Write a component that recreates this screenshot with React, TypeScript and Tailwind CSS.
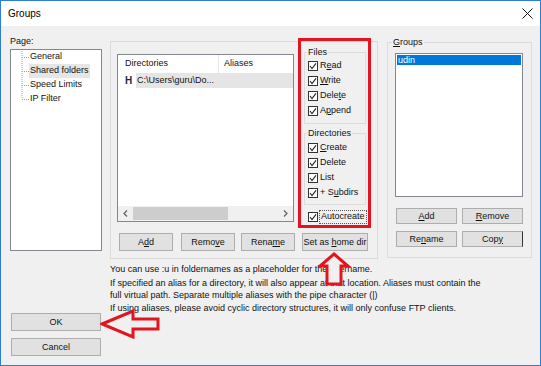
import React from "react";

function CheckBox() {
  return (
    <svg width="10" height="10" viewBox="0 0 10 10" className="shrink-0">
      <rect x="0.5" y="0.5" width="9" height="9" fill="#fff" stroke="#333" strokeWidth="1" />
      <polyline points="2,5 4,7.5 8,2.3" fill="none" stroke="#222" strokeWidth="1.1" />
    </svg>
  );
}

function CheckRow({ children }: { children: React.ReactNode }) {
  return (
    <div className="flex items-center h-[15px]">
      <CheckBox />
      <span className="ml-[2px] leading-none">{children}</span>
    </div>
  );
}

function Btn({ children, className = "" }: { children: React.ReactNode; className?: string }) {
  return (
    <div className={"flex items-center justify-center bg-[#e1e1e1] border border-[#adadad] leading-none whitespace-nowrap " + className}>
      <span>{children}</span>
    </div>
  );
}

export default function App() {
  return (
    <div className="relative w-[541px] h-[366px] bg-[#f0f0f0] border border-[#2f7dd0] flex flex-col overflow-hidden text-[9px] text-[#111] font-['Liberation_Sans',Arial,sans-serif]">
      {/* Title bar */}
      <div className="h-[25px] bg-white flex items-center justify-between pl-[7px] pr-[7px] shrink-0">
        <span className="text-[10px] text-black">Groups</span>
        <svg width="11" height="11" viewBox="0 0 11 11">
          <line x1="0.5" y1="0.5" x2="10.5" y2="10.5" stroke="#111" strokeWidth="1" />
          <line x1="10.5" y1="0.5" x2="0.5" y2="10.5" stroke="#111" strokeWidth="1" />
        </svg>
      </div>

      {/* Body */}
      <div className="flex flex-1 pt-[9px] pl-[9px]">
        {/* Left column */}
        <div className="w-[92px] flex flex-col">
          <div className="h-[14px] flex items-center">Page:</div>
          <div className="h-[202px] bg-white border border-[#828790] pt-0 flex">
            <svg width="18" height="56" viewBox="0 0 18 56" className="shrink-0">
              <line x1="11" y1="1" x2="11" y2="49" stroke="#a0a0a0" strokeWidth="1" strokeDasharray="1 1" />
              <line x1="11" y1="7.5" x2="18" y2="7.5" stroke="#a0a0a0" strokeWidth="1" strokeDasharray="1 1" />
              <line x1="11" y1="21.5" x2="18" y2="21.5" stroke="#a0a0a0" strokeWidth="1" strokeDasharray="1 1" />
              <line x1="11" y1="35.5" x2="18" y2="35.5" stroke="#a0a0a0" strokeWidth="1" strokeDasharray="1 1" />
              <line x1="11" y1="49.5" x2="18" y2="49.5" stroke="#a0a0a0" strokeWidth="1" strokeDasharray="1 1" />
            </svg>
            <div className="flex flex-col">
              <div className="h-[14px] flex items-center px-[1px]">General</div>
              <div className="h-[14px] flex items-center px-[1px] bg-[#e6e6e6]">Shared folders</div>
              <div className="h-[14px] flex items-center px-[1px]">Speed Limits</div>
              <div className="h-[14px] flex items-center px-[1px]">IP Filter</div>
            </div>
          </div>
          <Btn className="mt-[62px] ml-[1px] w-[90px] h-[18px] border-[#0078d7]">OK</Btn>
          <Btn className="mt-[7px] ml-[1px] w-[90px] h-[18px]">Cancel</Btn>
        </div>

        {/* Right area */}
        <div className="ml-[8px] flex flex-col">
          <div className="flex items-start">
            {/* Page panel */}
            <div className="relative mt-[6px] w-[268px] h-[218px] border border-[#dadada] flex flex-col">
              <div className="flex items-start">
                {/* Directory list */}
                <div className="mt-[12px] ml-[6px] w-[177px] h-[168px] bg-white border border-[#828790] flex flex-col">
                  <div className="h-[18px] flex items-center shrink-0">
                    <div className="w-[101px] h-full flex items-center pl-[7px] border-r border-[#e5e5e5]">Directories</div>
                    <div className="pl-[5px]">Aliases</div>
                  </div>
                  <div className="h-[15px] flex items-center">
                    <span className="w-[18px] pl-[7px] font-bold text-[10px] text-[#1b2a44]">H</span>
                    <div className="flex-1 h-full flex items-center bg-[#e5e5e5] pl-[1px]">C:\Users\guru\Do...</div>
                  </div>
                  <div className="flex-1" />
                  <div className="h-[15px] bg-[#f0f0f0] flex items-center shrink-0">
                    <svg width="15" height="15" viewBox="0 0 15 15" className="shrink-0">
                      <polyline points="9,4.5 6,7.5 9,10.5" fill="none" stroke="#606060" strokeWidth="1.2" />
                    </svg>
                    <div className="w-[95px] h-[13px] bg-[#cdcdcd]" />
                    <div className="flex-1" />
                    <svg width="15" height="15" viewBox="0 0 15 15" className="shrink-0">
                      <polyline points="6,4.5 9,7.5 6,10.5" fill="none" stroke="#606060" strokeWidth="1.2" />
                    </svg>
                  </div>
                </div>

                {/* Permission column */}
                <div className="ml-[10px] mt-[4px] w-[62px] flex flex-col">
                  <fieldset className="border border-[#dcdcdc] pl-[3px] pb-[5px]">
                    <legend className="ml-[-1px] px-[1px] h-[12px] leading-[12px]">Files</legend>
                    <CheckRow>R<span className="underline">e</span>ad</CheckRow>
                    <CheckRow><span className="underline">W</span>rite</CheckRow>
                    <CheckRow>Dele<span className="underline">t</span>e</CheckRow>
                    <CheckRow>A<span className="underline">p</span>pend</CheckRow>
                  </fieldset>
                  <fieldset className="mt-[3px] border border-[#dcdcdc] pl-[3px] pb-[4px]">
                    <legend className="ml-[-1px] px-[1px] h-[13px] leading-[12px]">Directories</legend>
                    <CheckRow><span className="underline">C</span>reate</CheckRow>
                    <CheckRow>Delete</CheckRow>
                    <CheckRow>List</CheckRow>
                    <CheckRow>+ S<span className="underline">u</span>bdirs</CheckRow>
                  </fieldset>
                  <div className="mt-[4px] pl-[4px] flex items-center h-[15px]">
                    <CheckBox />
                    <span className="ml-[1px] px-[1px] h-[14px] flex items-center border border-dotted border-[#555]">Autocreate</span>
                  </div>
                </div>
              </div>

              {/* Buttons */}
              <div className="mt-auto mb-[7px] flex">
                <Btn className="ml-[8px] w-[54px] h-[18px]">A<span className="underline">d</span>d</Btn>
                <Btn className="ml-[8px] w-[54px] h-[18px]">Remo<span className="underline">v</span>e</Btn>
                <Btn className="ml-[6px] w-[54px] h-[18px]">Rena<span className="underline">m</span>e</Btn>
                <Btn className="ml-[7px] w-[66px] h-[18px]">Set as <span className="underline">h</span>ome dir</Btn>
              </div>

              {/* Annotation frame */}
              <div className="absolute left-[187px] top-[-4px] w-[73px] h-[190px] border-[3px] border-[#e3141f] pointer-events-none" />
            </div>

            {/* Groups box */}
            <fieldset className="ml-[9px] mt-[1px] w-[145px] h-[222px] border border-[#dcdcdc] px-[7px]">
              <legend className="ml-[-3px] px-[1px] h-[12px] leading-[12px]"><span className="underline">G</span>roups</legend>
              <div className="mt-[5px] w-[128px] h-[144px] bg-white border border-[#828790] pt-[1px] px-[1px]">
                <div className="h-[10px] bg-[#0078d7] text-white flex items-center pl-[1px] leading-none">udin</div>
              </div>
              <div className="mt-[11px] ml-[1px] flex">
                <Btn className="w-[61px] h-[16px]"><span className="underline">A</span>dd</Btn>
                <Btn className="ml-[5px] w-[61px] h-[16px]"><span className="underline">R</span>emove</Btn>
              </div>
              <div className="mt-[7px] ml-[1px] flex">
                <Btn className="w-[61px] h-[16px] border-[#333]">Re<span className="underline">n</span>ame</Btn>
                <Btn className="ml-[5px] w-[61px] h-[16px] border-r-[#333]">Cop<span className="underline">y</span></Btn>
              </div>
            </fieldset>
          </div>

          {/* Help text */}
          <div className="mt-[4px] flex flex-col leading-[12px]">
            <div>You can use :u in foldernames as a placeholder for the username.</div>
            <div className="mt-[2px]">If specified an alias for a directory, it will also appear at that location. Aliases must contain the</div>
            <div>full virtual path. Separate multiple aliases with the pipe character (|)</div>
            <div className="mt-[1px]">If using aliases, please avoid cyclic directory structures, it will only confuse FTP clients.</div>
          </div>
        </div>
      </div>

      {/* Annotation arrows */}
      <svg width="34" height="34" viewBox="0 0 34 34" className="absolute left-[317px] top-[251px] pointer-events-none">
        <polygon points="16,2 30,14 23,14 23,32 9,32 9,14 2,14" fill="#f0f0f0" stroke="#e3141f" strokeWidth="3" strokeLinejoin="miter" />
      </svg>
      <svg width="62" height="35" viewBox="0 0 62 35" className="absolute left-[99px] top-[305px] pointer-events-none">
        <polygon points="2,18 33,5 33,13 58,13 58,23 33,23 33,31" fill="#f0f0f0" stroke="#e3141f" strokeWidth="3" strokeLinejoin="miter" />
      </svg>
    </div>
  );
}
